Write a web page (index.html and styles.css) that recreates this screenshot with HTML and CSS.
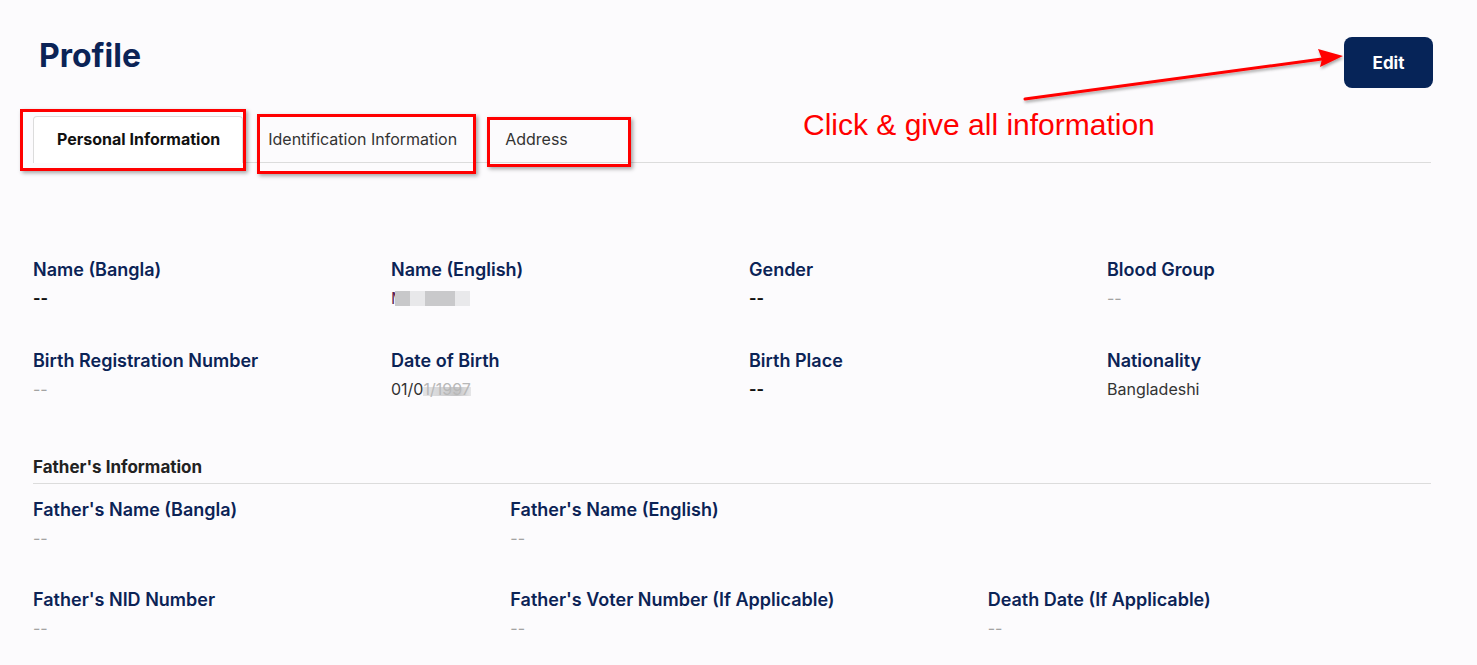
FILE: index.html
```html
<!DOCTYPE html>
<html lang="en">
  <head>
    <meta charset="UTF-8" />
    <meta name="viewport" content="width=device-width, initial-scale=1.0" />
    <title>Profile</title>
    <link rel="stylesheet" href="styles.css">
  </head>
  <body>
    <div class="profile-page">
      <div class="profile-header">
        <h1 class="profile-title">Profile</h1>
        <button class="edit-button">Edit</button>
      </div>

      <div class="profile-tabs">
        <div class="profile-tab active">Personal Information</div>
        <div class="profile-tab">Identification Information</div>
        <div class="profile-tab">Address</div>
      </div>

      <div class="info-grid four">
        <div class="info-item">
          <div class="info-label">Name (Bangla)</div>
          <div class="info-value strong">--</div>
        </div>
        <div class="info-item">
          <div class="info-label">Name (English)</div>
          <div class="info-value name-value">M<span class="blur-name"><i class="b1"></i><i class="b2"></i><i class="b3"></i><i class="b4"></i></span></div>
        </div>
        <div class="info-item">
          <div class="info-label">Gender</div>
          <div class="info-value strong">--</div>
        </div>
        <div class="info-item">
          <div class="info-label">Blood Group</div>
          <div class="info-value empty">--</div>
        </div>
        <div class="info-item">
          <div class="info-label">Birth Registration Number</div>
          <div class="info-value empty">--</div>
        </div>
        <div class="info-item">
          <div class="info-label">Date of Birth</div>
          <div class="info-value">01/0<span class="blur-date">1/1997</span></div>
        </div>
        <div class="info-item">
          <div class="info-label">Birth Place</div>
          <div class="info-value strong">--</div>
        </div>
        <div class="info-item">
          <div class="info-label">Nationality</div>
          <div class="info-value">Bangladeshi</div>
        </div>
      </div>

      <div class="section-title">Father's Information</div>

      <div class="info-grid three">
        <div class="info-item">
          <div class="info-label">Father's Name (Bangla)</div>
          <div class="info-value empty">--</div>
        </div>
        <div class="info-item">
          <div class="info-label">Father's Name (English)</div>
          <div class="info-value empty">--</div>
        </div>
        <div class="info-item"></div>
        <div class="info-item">
          <div class="info-label">Father's NID Number</div>
          <div class="info-value empty">--</div>
        </div>
        <div class="info-item">
          <div class="info-label">Father's Voter Number (If Applicable)</div>
          <div class="info-value empty">--</div>
        </div>
        <div class="info-item">
          <div class="info-label">Death Date (If Applicable)</div>
          <div class="info-value empty">--</div>
        </div>
      </div>
    </div>

    <!-- screenshot annotations -->
    <div class="mark mark-1"></div>
    <div class="mark mark-2"></div>
    <div class="mark mark-3"></div>
    <div class="note">Click &amp; give all information</div>
    <svg class="arrow" width="1477" height="665" viewBox="0 0 1477 665">
      <defs>
        <filter id="shadow" x="-10%" y="-50%" width="120%" height="200%">
          <feDropShadow dx="1" dy="2" stdDeviation="1.5" flood-color="#000" flood-opacity="0.35" />
        </filter>
      </defs>
      <g filter="url(#shadow)">
        <line x1="1025" y1="99" x2="1322" y2="59" stroke="#f00" stroke-width="3" stroke-linecap="round" />
        <path d="M1343 56 L1318 49 L1322 59 L1320 67 Z" fill="#f00" />
      </g>
    </svg>
  </body>
</html>
```

FILE: styles.css
```css
body {
  font-family: Inter, "Noto Sans", sans-serif;
  margin: 0;
  padding: 0;
  background-color: #fcfbfd;
  color: #333;
}

.profile-page {
  padding: 37px 46px 0 33px;
}

.profile-header {
  display: flex;
  justify-content: space-between;
  align-items: flex-start;
}

.profile-title {
  margin: 1px 0 0 6px;
  font-size: 32px;
  line-height: 36px;
  font-weight: 700;
  color: #0b2356;
}

.edit-button {
  width: 89px;
  height: 51px;
  margin-right: -2px;
  border: none;
  border-radius: 8px;
  background-color: #062458;
  color: #fff;
  font-family: Inter, sans-serif;
  font-size: 17px;
  font-weight: 700;
  cursor: pointer;
}

.profile-tabs {
  display: flex;
  margin-top: 28px;
  border-bottom: 1px solid #dcdcdc;
}

.profile-tab {
  height: 45px;
  line-height: 45px;
  padding: 0 22px 0 24px;
  font-size: 16px;
  color: #333;
  border: 1px solid transparent;
  border-bottom: none;
  margin-bottom: -1px;
}

.profile-tab.active {
  background-color: #fff;
  border-color: #dcdcdc;
  border-radius: 4px 4px 0 0;
  font-weight: 700;
  color: #111;
  height: 46px;
  padding: 0 22px 0 23px;
}

.info-grid {
  display: grid;
  column-gap: 34px;
  row-gap: 39px;
}

.info-grid.four {
  grid-template-columns: repeat(4, 1fr);
  margin-top: 95px;
}

.info-grid.three {
  grid-template-columns: repeat(3, 1fr);
  margin-top: 14px;
  row-gap: 38px;
}

.info-label {
  font-size: 18px;
  line-height: 24px;
  font-weight: 600;
  color: #0b2356;
}

.info-value {
  margin-top: 4px;
  font-size: 16px;
  line-height: 24px;
  color: #333;
}

.info-value.strong {
  font-weight: 700;
  color: #111;
}

.info-value.empty {
  color: #a3a3a3;
}

.name-value {
  display: flex;
  align-items: center;
  color: #5a2050;
  overflow: hidden;
}

.blur-name {
  display: flex;
  margin-left: -10px;
}

.blur-name i {
  display: block;
  height: 15px;
  width: 15px;
}

.blur-name .b1 { background-color: #c8c8ca; }
.blur-name .b2 { background-color: #e8e8ea; }
.blur-name .b3 { background-color: #c9c9cb; width: 30px; }
.blur-name .b4 { background-color: #e9e9eb; }

.blur-date {
  color: #b8b8b8;
  background: linear-gradient(90deg, #e4e4e6 0, #d4d4d6 40%, #c4c4c6 70%, #e6e6e8 100%);
  background-size: 100% 9px;
  background-repeat: no-repeat;
  background-position: 0 8px;
}

.section-title {
  margin-top: 54px;
  padding-bottom: 4px;
  font-size: 17px;
  line-height: 24px;
  font-weight: 700;
  color: #222;
  border-bottom: 1px solid #dcdcdc;
}

.mark {
  position: absolute;
  border: 3px solid #f00;
  box-shadow: 2px 2px 4px rgba(0, 0, 0, 0.35);
  box-sizing: border-box;
}

.mark-1 { left: 20px; top: 109px; width: 226px; height: 62px; }
.mark-2 { left: 257px; top: 114px; width: 219px; height: 60px; }
.mark-3 { left: 487px; top: 117px; width: 144px; height: 50px; }

.note {
  position: absolute;
  left: 803px;
  top: 107px;
  font-family: "Liberation Sans", Arial, sans-serif;
  font-size: 30px;
  line-height: 36px;
  color: #f00;
}

.arrow {
  position: absolute;
  left: 0;
  top: 0;
  pointer-events: none;
}
```
